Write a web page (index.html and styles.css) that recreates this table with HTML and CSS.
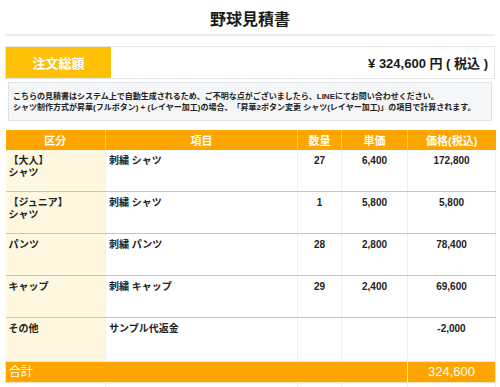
FILE: index.html
```html
<!DOCTYPE html>
<html lang="ja">
<head>
<meta charset="utf-8">
<link rel="stylesheet" href="styles.css">
</head>
<body>
<div class="page">
  <h1 class="title">野球見積書</h1>
  <div class="summary">
    <div class="summary-label">注文総額</div>
    <div class="summary-value">¥ 324,600 円 ( 税込 )</div>
  </div>
  <div class="notice">
    <p>こちらの見積書はシステム上で自動生成されるため、ご不明な点がございましたら、LINEにてお問い合わせください。</p>
    <p>シャツ制作方式が昇華(フルボタン) + (レイヤー加工)の場合、「昇華2ボタン変更 シャツ(レイヤー加工)」の項目で計算されます。</p>
  </div>
  <table class="quote">
    <colgroup>
      <col class="c-cat"><col class="c-item"><col class="c-qty"><col class="c-unit"><col class="c-price">
    </colgroup>
    <thead>
      <tr><th>区分</th><th>項目</th><th>数量</th><th>単価</th><th>価格(税込)</th></tr>
    </thead>
    <tbody>
      <tr><td class="cat">【大人】<br>シャツ</td><td>刺繍 シャツ</td><td class="num">27</td><td class="num">6,400</td><td class="num">172,800</td></tr>
      <tr><td class="cat">【ジュニア】<br>シャツ</td><td>刺繍 シャツ</td><td class="num">1</td><td class="num">5,800</td><td class="num">5,800</td></tr>
      <tr><td class="cat">パンツ</td><td>刺繍 パンツ</td><td class="num">28</td><td class="num">2,800</td><td class="num">78,400</td></tr>
      <tr><td class="cat">キャップ</td><td>刺繍 キャップ</td><td class="num">29</td><td class="num">2,400</td><td class="num">69,600</td></tr>
      <tr class="last"><td class="cat">その他</td><td>サンプル代返金</td><td class="num"></td><td class="num"></td><td class="num">-2,000</td></tr>
      <tr class="total"><td colspan="4">合計</td><td class="num">324,600</td></tr>
      <tr class="blank"><td></td><td></td><td></td><td></td><td></td></tr>
    </tbody>
  </table>
</div>
</body>
</html>
```

FILE: styles.css
```css
html, body {
  margin: 0;
  padding: 0;
  background: #ffffff;
}
body {
  font-family: "Liberation Sans", "Noto Sans CJK JP", sans-serif;
  color: #222;
}
.page {
  padding: 0 5px;
}
.title {
  margin: 0;
  padding: 9px 0 4px;
  font-size: 16px;
  line-height: 21px;
  font-weight: 700;
  text-align: center;
  color: #1a1a1a;
  border-bottom: 2px solid #e8edf3;
}
.summary {
  margin-top: 10px;
  display: flex;
  border: 1px solid #e6e6e6;
  height: 31px;
}
.summary-label {
  width: 105px;
  background: #ffc107;
  color: #fff;
  font-size: 13px;
  font-weight: 700;
  display: flex;
  align-items: center;
  justify-content: center;
}
.summary-value {
  flex: 1;
  display: flex;
  align-items: center;
  justify-content: flex-end;
  padding-right: 6px;
  font-size: 13px;
  font-weight: 700;
  color: #1a1a1a;
}
.notice {
  margin: 3px 3px 0;
  background: #f5f6f8;
  border: 1px solid #dfe3e8;
  padding: 8px 4px 7px;
}
.notice p {
  margin: 0;
  font-size: 8px;
  line-height: 11px;
  font-weight: 700;
  color: #222;
}
.quote {
  margin-top: 9px;
  width: 490px;
  border-collapse: collapse;
  table-layout: fixed;
}
.c-cat { width: 100px; }
.c-item { width: 192px; }
.c-qty { width: 44px; }
.c-unit { width: 66px; }
.c-price { width: 88px; }
.quote th {
  background: #ffa500;
  color: #fff;
  font-size: 11px;
  font-weight: 700;
  height: 20px;
  padding: 0;
  border-right: 1px solid rgba(255, 255, 255, 0.35);
  text-align: center;
}
.quote th:last-child {
  border-right: none;
}
.quote td {
  font-size: 10px;
  line-height: 12px;
  font-weight: 700;
  vertical-align: top;
  padding: 5px 3px 0;
  height: 36px;
  border-right: 1px solid #f0f0f0;
  border-bottom: 1px solid #ffbd57;
  color: #222;
}
.quote td.cat {
  background: #fff8e1;
}
.quote td.num {
  text-align: center;
}
.quote tr.last td {
  height: 38px;
  border-bottom: 1px solid #f0e6d4;
}
.quote tr.total td {
  background: #ffa500;
  color: #fff;
  height: 20px;
  padding: 0 3px;
  vertical-align: middle;
  font-size: 12px;
  font-weight: 400;
  border: 1px solid #f5e3bf;
}
.quote tr.total td.num {
  font-size: 13px;
}
.quote tr.blank td {
  height: 20px;
  padding: 0;
  border-bottom: none;
  border-right: 1px solid #f0f0f0;
}
```
